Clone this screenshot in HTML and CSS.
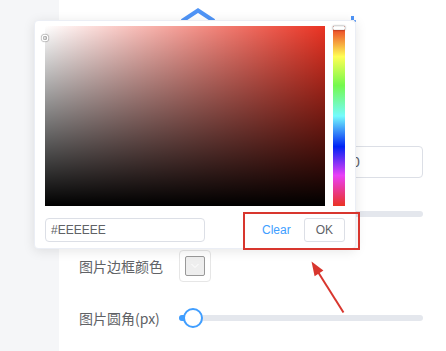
FILE: index.html
```html
<!DOCTYPE html>
<html lang="zh">
<head>
<meta charset="utf-8">
<title>Color picker</title>
<link rel="stylesheet" href="styles.css">
</head>
<body>
<div class="app">
  <aside class="sidebar"></aside>
  <main class="main">
    <div class="deco-row">
      <svg class="deco" width="176" height="24" viewBox="0 0 176 24">
        <polyline points="1,21 17,10.5 33,21" fill="none" stroke="#4f94f6" stroke-width="4" stroke-linejoin="miter"/>
        <rect x="170" y="16" width="3" height="4" fill="#4f94f6"/>
        <rect x="173" y="20" width="2" height="2" fill="#6ea6f6"/>
      </svg>
    </div>
    <div class="form-row row-number">
      <span class="label">图片宽度</span>
      <div class="control control-end"><div class="num-input">0</div></div>
    </div>
    <div class="form-row row-track">
      <span class="label"></span>
      <div class="control"><div class="track"></div></div>
    </div>
    <div class="form-row row-color">
      <span class="label">图片边框颜色</span>
      <div class="control">
        <div class="swatch">
          <div class="swatch-inner">
            <svg width="10" height="6" viewBox="0 0 10 6"><polyline points="1.5,1 5,4.5 8.5,1" fill="none" stroke="#ffffff" stroke-width="1"/></svg>
          </div>
        </div>
      </div>
    </div>
    <div class="form-row row-radius">
      <span class="label">图片圆角(px)</span>
      <div class="control">
        <div class="slider">
          <div class="slider-bar"></div>
          <div class="slider-thumb"></div>
        </div>
      </div>
    </div>
  </main>

  <div class="color-dropdown">
    <div class="picker-main">
      <div class="sv-panel">
        <div class="sv-white"></div>
        <div class="sv-black"></div>
        <div class="sv-cursor"></div>
      </div>
      <div class="hue">
        <div class="hue-thumb"></div>
      </div>
    </div>
    <div class="picker-btns">
      <div class="hex-input">#EEEEEE</div>
      <span class="btn-clear">Clear</span>
      <span class="btn-ok">OK</span>
    </div>
  </div>

  <div class="annot-box"></div>
  <svg class="annot-arrow" width="446" height="351" viewBox="0 0 446 351">
    <line x1="343.5" y1="312.5" x2="318" y2="272" stroke="#d8362e" stroke-width="2"/>
    <polygon points="311.5,261.5 323.4,270.6 314.6,276.2" fill="#d8362e"/>
  </svg>
</div>
</body>
</html>
```

FILE: styles.css
```css
* { box-sizing: border-box; }
html, body { margin: 0; padding: 0; }
body {
  font-family: "Liberation Sans", "Noto Sans CJK SC", sans-serif;
  background: #fff;
}
.app {
  position: relative;
  display: flex;
  width: 446px;
  height: 351px;
  overflow: hidden;
}
.sidebar {
  width: 59px;
  flex: none;
  background: #f5f6f8;
}
.main {
  flex: 1;
  display: flex;
  flex-direction: column;
  padding: 0 23px 0 20px;
  background: #fff;
}
.deco-row {
  height: 24px;
  padding-left: 102px;
}
.deco { display: block; }
.form-row {
  display: flex;
  align-items: center;
}
.label {
  width: 100px;
  flex: none;
  font-family: "Noto Sans CJK SC", "Liberation Sans", sans-serif;
  font-size: 14px;
  color: #606266;
}
.control {
  flex: 1;
  display: flex;
  align-items: center;
}
.control-end { justify-content: flex-end; }
.row-number { margin-top: 122px; height: 32px; }
.num-input {
  width: 83px;
  height: 32px;
  border: 1px solid #dcdfe6;
  border-radius: 4px;
  padding-left: 11px;
  font-size: 14px;
  line-height: 30px;
  color: #606266;
}
.row-track { margin-top: 33px; height: 6px; }
.track {
  width: 100%;
  height: 6px;
  border-radius: 3px;
  background: #e4e7ed;
}
.row-color { margin-top: 33px; height: 32px; }
.swatch {
  width: 32px;
  height: 32px;
  border: 1px solid #e6e6e6;
  border-radius: 4px;
  padding: 5px;
}
.swatch-inner {
  width: 100%;
  height: 100%;
  border: 1px solid #999;
  border-radius: 2px;
  background: #eeeeee;
  display: flex;
  align-items: center;
  justify-content: center;
}
.swatch-inner svg { display: block; }
.row-radius { margin-top: 26px; height: 20px; }
.slider {
  position: relative;
  width: 100%;
  height: 6px;
  border-radius: 3px;
  background: #e4e7ed;
}
.slider-bar {
  width: 14px;
  height: 6px;
  border-radius: 3px 0 0 3px;
  background: #409eff;
}
.slider-thumb {
  position: absolute;
  left: 4px;
  top: -7px;
  width: 20px;
  height: 20px;
  border: 2px solid #409eff;
  border-radius: 50%;
  background: #fff;
}

.color-dropdown {
  position: absolute;
  left: 34px;
  top: 20px;
  width: 322px;
  height: 229px;
  padding: 5px 10px 6px;
  border: 1px solid #ebeef5;
  border-radius: 4px;
  background: #fff;
  box-shadow: 0 2px 12px 0 rgba(0, 0, 0, 0.1);
  z-index: 5;
}
.picker-main {
  display: flex;
  gap: 8px;
  margin-bottom: 12px;
}
.sv-panel {
  position: relative;
  width: 280px;
  height: 180px;
  background: #ea3323;
}
.sv-white {
  position: absolute;
  inset: 0;
  background: linear-gradient(to right, #fff, rgba(255, 255, 255, 0));
}
.sv-black {
  position: absolute;
  inset: 0;
  background: linear-gradient(to top, #000, rgba(0, 0, 0, 0));
}
.sv-cursor {
  position: absolute;
  left: -2px;
  top: 10px;
  width: 4px;
  height: 4px;
  border-radius: 50%;
  box-shadow: 0 0 0 1.5px #fff, inset 0 0 1px 1px rgba(0, 0, 0, 0.3), 0 0 1px 2px rgba(0, 0, 0, 0.4);
}
.hue {
  position: relative;
  width: 12px;
  height: 180px;
  background: linear-gradient(to bottom,
    #ea3323 0%, #fffe54 17%, #75f94d 33%, #74fbfd 50%,
    #0023f5 67%, #ea3ff7 83%, #ea3323 100%);
}
.hue-thumb {
  position: absolute;
  left: 0;
  top: 0;
  width: 12px;
  height: 4px;
  border: 1px solid #f0f0f0;
  border-radius: 1px;
  background: #fff;
  box-shadow: 0 0 2px rgba(0, 0, 0, 0.6);
}
.picker-btns {
  display: flex;
  align-items: center;
  height: 24px;
}
.hex-input {
  width: 160px;
  height: 24px;
  border: 1px solid #dcdfe6;
  border-radius: 4px;
  padding-left: 5px;
  font-size: 12px;
  line-height: 22px;
  color: #606266;
}
.btn-clear {
  margin-left: auto;
  font-size: 12px;
  color: #409eff;
  margin-right: 13px;
}
.btn-ok {
  height: 24px;
  padding: 0 11px;
  border: 1px solid #dcdfe6;
  border-radius: 3px;
  font-size: 12px;
  line-height: 22px;
  color: #606266;
}

.annot-box {
  position: absolute;
  left: 243px;
  top: 212px;
  width: 117px;
  height: 38px;
  border: 2px solid #d8362e;
  z-index: 6;
}
.annot-arrow {
  position: absolute;
  left: 0;
  top: 0;
  z-index: 6;
  pointer-events: none;
}
```
